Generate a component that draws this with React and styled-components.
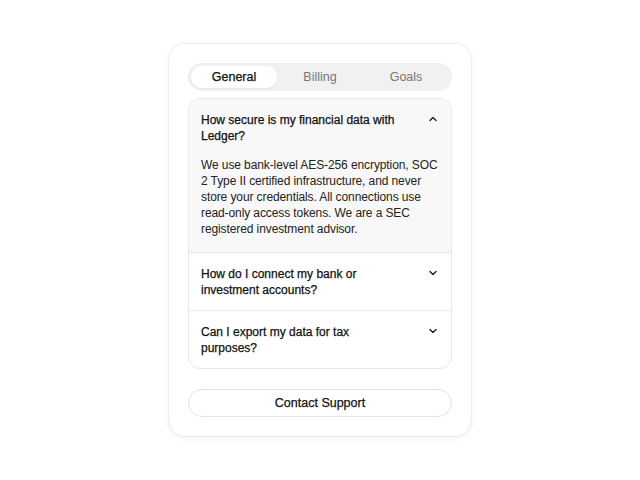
import React, { useState } from 'react';
import styled, { createGlobalStyle, css } from 'styled-components';

const GlobalStyle = createGlobalStyle`
  html, body {
    margin: 0;
    padding: 0;
    background: #ffffff;
    font-family: "Liberation Sans", Arial, sans-serif;
    -webkit-font-smoothing: antialiased;
  }
  * { box-sizing: border-box; }
`;

const tabs = ['General', 'Billing', 'Goals'];

const faqs = [
    {
        q: 'How secure is my financial data with Ledger?',
        a: 'We use bank-level AES-256 encryption, SOC 2 Type II certified infrastructure, and never store your credentials. All connections use read-only access tokens. We are a SEC registered investment advisor.'
    },
    { q: 'How do I connect my bank or investment accounts?', a: '' },
    { q: 'Can I export my data for tax purposes?', a: '' }
];

const Chevron = ({ up }) => (
    <svg width="10" height="10" viewBox="0 0 10 10" fill="none">
        <path
            d={up ? 'M2 6.5 L5 3.5 L8 6.5' : 'M2 3.5 L5 6.5 L8 3.5'}
            stroke="#1f1f1f"
            strokeWidth="1.4"
            strokeLinecap="round"
            strokeLinejoin="round"
        />
    </svg>
);

export default function App() {
    const [tab, setTab] = useState(0);
    const [open, setOpen] = useState(0);

    return (
        <Page>
            <GlobalStyle />
            <Card>
                <TabBar>
                    {tabs.map((t, i) => (
                        <Tab key={t} active={tab === i} onClick={() => setTab(i)}>
                            {t}
                        </Tab>
                    ))}
                </TabBar>
                <Accordion>
                    {faqs.map((f, i) => (
                        <Item key={f.q} open={open === i}>
                            <Question onClick={() => setOpen(open === i ? -1 : i)}>
                                <QuestionText>{f.q}</QuestionText>
                                <ChevronWrap>
                                    <Chevron up={open === i} />
                                </ChevronWrap>
                            </Question>
                            {open === i && <Answer>{f.a}</Answer>}
                        </Item>
                    ))}
                </Accordion>
                <SupportButton>Contact Support</SupportButton>
            </Card>
        </Page>
    );
}

const Page = styled.div`
    min-height: 480px;
    display: flex;
    align-items: center;
    justify-content: center;
`;

const Card = styled.div`
    width: 304px;
    padding: 19px;
    border: 1px solid #ececec;
    border-radius: 18px;
    background: #fff;
    box-shadow: 0 2px 6px rgba(0, 0, 0, 0.05);
    display: flex;
    flex-direction: column;
`;

const TabBar = styled.div`
    display: grid;
    grid-template-columns: repeat(3, 1fr);
    padding: 3px;
    height: 28px;
    border-radius: 14px;
    background: #f1f1f1;
`;

const Tab = styled.button`
    border: 0;
    background: transparent;
    border-radius: 11px;
    font-family: inherit;
    font-size: 12.5px;
    color: #777;
    padding: 0;
    cursor: pointer;
    ${props => props.active && css`
        background: #fff;
        color: #111;
        -webkit-text-stroke: 0.25px #111;
        box-shadow: 0 1px 2px rgba(0, 0, 0, 0.06);
    `};
`;

const Accordion = styled.div`
    margin-top: 7px;
    border: 1px solid #e8e8e8;
    border-radius: 12px;
    overflow: hidden;
`;

const Item = styled.div`
    padding: 13px 10px 12px 12px;
    &:not(:first-child) {
        border-top: 1px solid #e8e8e8;
    }
    ${props => props.open && css`
        background: #f8f8f8;
    `};
`;

const Question = styled.div`
    display: flex;
    justify-content: space-between;
    align-items: flex-start;
    gap: 12px;
    cursor: pointer;
`;

const QuestionText = styled.span`
    flex: 1;
    max-width: 200px;
    font-size: 12px;
    line-height: 16px;
    color: #111;
    -webkit-text-stroke: 0.25px #111;
`;

const ChevronWrap = styled.span`
    display: flex;
    padding-top: 2px;
    margin-right: 3px;
`;

const Answer = styled.p`
    margin: 13px 0 0;
    padding-bottom: 3px;
    font-size: 12px;
    line-height: 16px;
    letter-spacing: -0.1px;
    color: #222;
`;

const SupportButton = styled.button`
    margin-top: 20px;
    height: 28px;
    border: 1px solid #e3e3e3;
    border-radius: 14px;
    background: #fff;
    font-family: inherit;
    font-size: 12.5px;
    color: #111;
    -webkit-text-stroke: 0.25px #111;
    cursor: pointer;
`;
